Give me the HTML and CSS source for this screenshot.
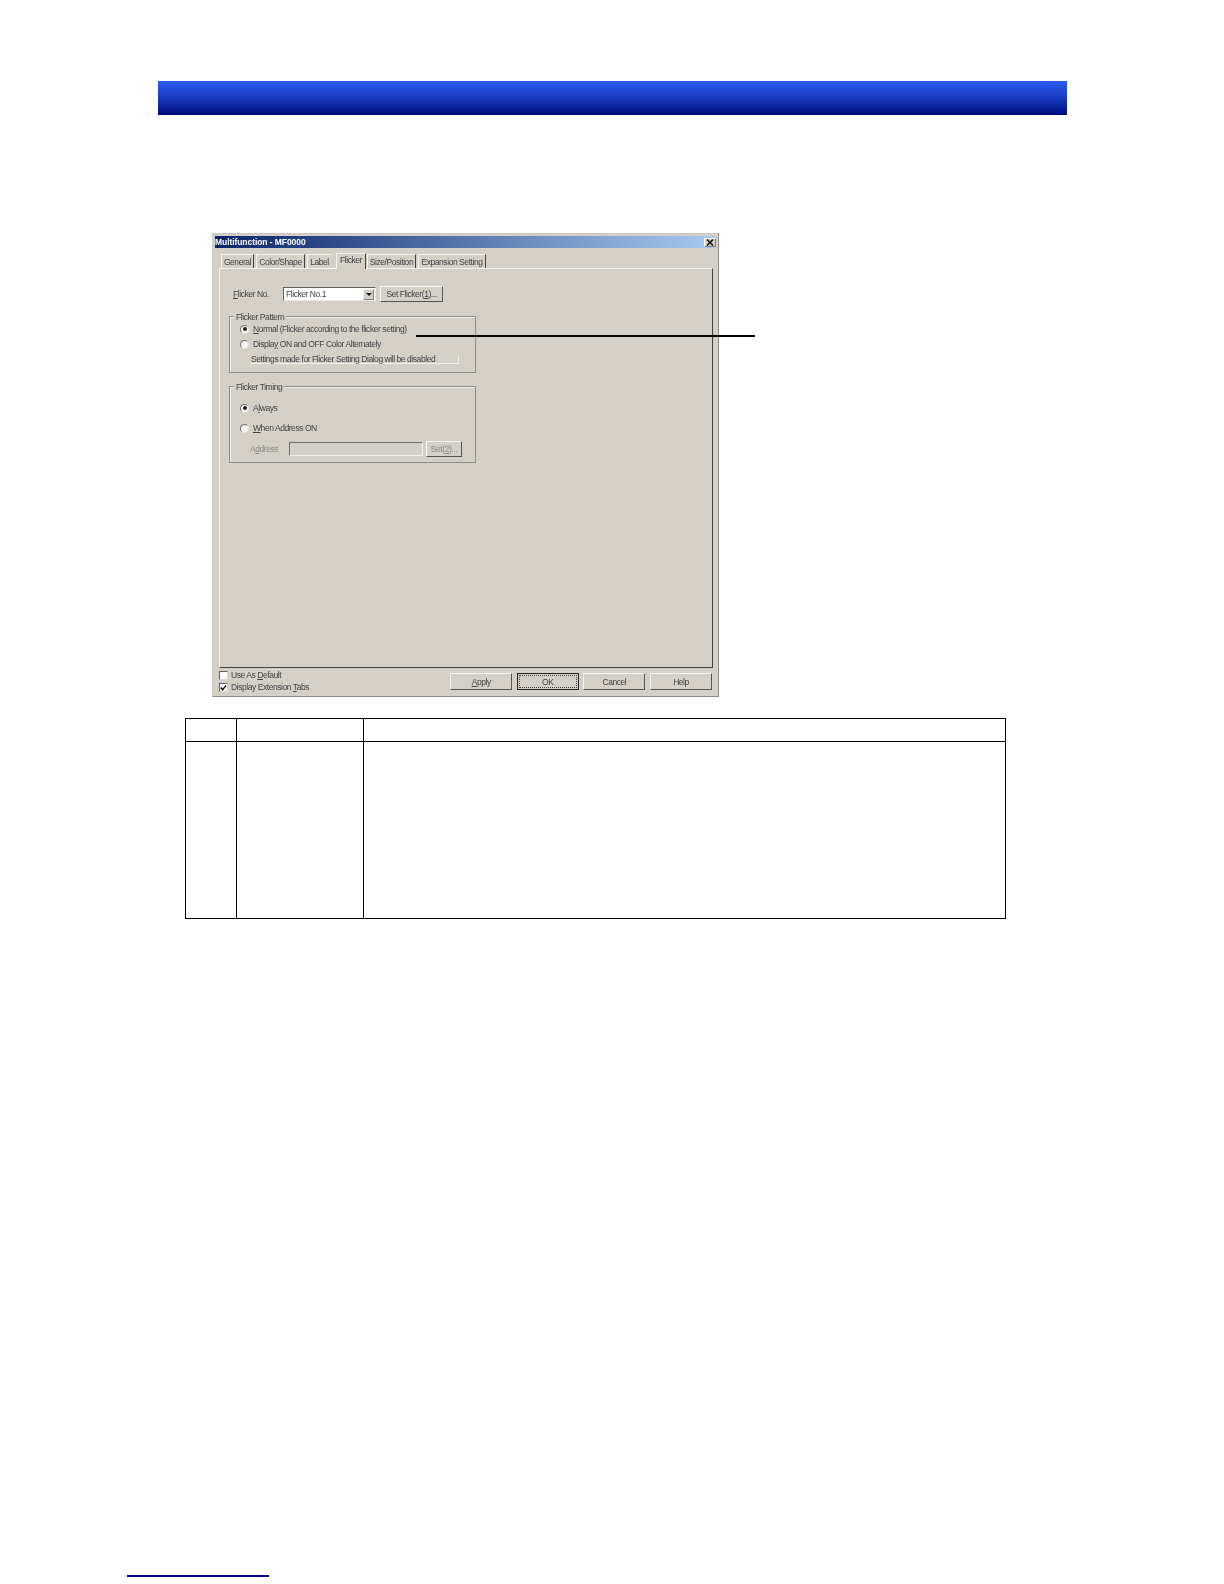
FILE: index.html
```html
<!DOCTYPE html>
<html lang="en">
<head>
  <meta charset="UTF-8">
  <title>Multifunction - Flicker</title>
  <link rel="stylesheet" href="styles.css">
</head>

<body>
<div class="banner"></div>

<div class="figure">
  <div class="dialog">
    <div class="titlebar">
      <span>Multifunction - MF0000</span>
      <span class="close">
        <svg width="10" height="7" viewBox="0 0 10 7"><path d="M2 0.5 L8 6.5 M8 0.5 L2 6.5" stroke="#111" stroke-width="1.6" fill="none"/></svg>
      </span>
    </div>

    <div class="tabs">
      <div class="tab tab-general">General</div>
      <div class="tab tab-color">Color/Shape</div>
      <div class="tab tab-label">Label</div>
      <div class="tab tab-active">Flicker</div>
      <div class="tab tab-size">Size/Position</div>
      <div class="tab tab-exp">Expansion Setting</div>
    </div>

    <div class="panel">
      <div class="flicker-row">
        <span class="flicker-label"><u>F</u>licker No.</span>
        <div class="select">
          <span class="select-value">Flicker No.1</span>
          <span class="select-btn"></span>
        </div>
        <div class="btn btn-flicker">Set Flicker(<u>1</u>)...</div>
      </div>

      <div class="group group-pattern">
        <div class="legend">Flicker Pattern</div>
        <div class="option option-first"><span class="radio on"></span><span><u>N</u>ormal (Flicker according to the flicker setting)</span></div>
        <div class="option option-second"><span class="radio"></span><span>Displa<u>y</u> ON and OFF Color Alternately</span></div>
        <div class="note">Settings made for Flicker Setting Dialog will be disabled</div>
      </div>

      <div class="group group-timing">
        <div class="legend">Flicker Timing</div>
        <div class="option option-always"><span class="radio on"></span><span>A<u>l</u>ways</span></div>
        <div class="option option-when"><span class="radio"></span><span><u>W</u>hen Address ON</span></div>
        <div class="address-row">
          <span class="address-label">A<u>d</u>dress</span>
          <div class="input"></div>
          <div class="btn btn-set">Set(<u>2</u>)...</div>
        </div>
      </div>
    </div>

    <div class="dialog-foot">
      <div class="checks">
        <div class="check-row"><span class="checkbox"></span><span>Use As <u>D</u>efault</span></div>
        <div class="check-row">
          <span class="checkbox">
            <svg width="8" height="8" viewBox="0 0 8 8"><path d="M1 3.5 L3 6 L7 1" stroke="#111" stroke-width="1.7" fill="none"/></svg>
          </span>
          <span>Display Extension <u>T</u>abs</span>
        </div>
      </div>
      <div class="foot-btns">
        <div class="btn btn-foot"><u>A</u>pply</div>
        <div class="btn btn-foot btn-default"><span class="focus">OK</span></div>
        <div class="btn btn-foot">Cancel</div>
        <div class="btn btn-foot">Help</div>
      </div>
    </div>
  </div>
  <div class="callout"></div>
</div>

<table class="spec">
  <tr class="spec-head"><td class="c1"></td><td class="c2"></td><td></td></tr>
  <tr class="spec-body"><td></td><td></td><td></td></tr>
</table>

<div class="foot-rule"></div>
</body>
</html>
```

FILE: styles.css
```css
* {
  box-sizing: border-box;
}

html, body {
  margin: 0;
  padding: 0;
  background: #fff;
}

body {
  height: 1584px;
  overflow: hidden;
  padding-top: 81px;
  font-family: "Liberation Sans", Arial, sans-serif;
}

.banner {
  width: 909px;
  height: 34px;
  margin-left: 158px;
  background: linear-gradient(to bottom, #2b5cf2 0%, #1f45d0 35%, #0d2aa6 70%, #000a7c 100%);
}

/* dialog screenshot */
.figure {
  position: relative;
  width: 508px;
  margin: 118px 0 0 212px;
}

.dialog {
  width: 507px;
  height: 464px;
  padding: 2px 2px 0;
  background: #d4d0c8;
  border: 1px solid #8a8a86;
  border-top-color: #c8c8c4;
  border-left-color: #c8c8c4;
  font-size: 8.5px;
  line-height: 10px;
  letter-spacing: -0.44px;
  color: #444;
  white-space: nowrap;
  filter: blur(0.35px);
}

.titlebar {
  display: flex;
  justify-content: space-between;
  align-items: center;
  height: 12px;
  background: linear-gradient(to right, #0a246a, #a6caf0);
  color: #fff;
  font-weight: bold;
  letter-spacing: -0.07px;
}

.close {
  display: flex;
  align-items: center;
  justify-content: center;
  width: 12px;
  height: 9px;
  background: #d4d0c8;
  border: 1px solid #808080;
  border-top-color: #fff;
  border-left-color: #fff;
}

.tabs {
  display: flex;
  align-items: flex-end;
  height: 20px;
  padding-left: 6px;
}

.tab {
  height: 14px;
  padding-top: 2px;
  text-align: center;
  border-top: 1px solid #f4f4f0;
  border-left: 1px solid #f4f4f0;
  border-right: 1px solid #404040;
  margin-right: 2px;
}

.tab-general { width: 33px; }
.tab-color { width: 49px; }
.tab-label { width: 25px; margin-right: 4px; border-right-color: transparent; }
.tab-active { width: 30px; height: 16px; margin-right: 1px; position: relative; top: 1px; background: #d4d0c8; z-index: 1; padding-top: 1px; }
.tab-size { width: 49px; }
.tab-exp { width: 68px; }

.panel {
  width: 494px;
  height: 400px;
  margin-left: 4px;
  padding: 17px 0 0 9px;
  border: 1px solid #404040;
  border-top-color: #f4f4f0;
  border-left-color: #f4f4f0;
}

.flicker-row {
  display: flex;
  align-items: center;
  height: 16px;
  padding-left: 4px;
}

.flicker-label {
  width: 50px;
}

.select {
  display: flex;
  justify-content: space-between;
  align-items: center;
  width: 93px;
  height: 14px;
  margin-right: 4px;
  padding: 0 1px 0 2px;
  background: #fff;
  border: 1px solid #606060;
  border-right-color: #e8e8e4;
  border-bottom-color: #e8e8e4;
}

.select-btn {
  position: relative;
  width: 11px;
  height: 11px;
  background: #d4d0c8;
  border: 1px solid #808080;
  border-top-color: #eee;
  border-left-color: #eee;
}

.select-btn::after {
  content: "";
  position: absolute;
  left: 2px;
  top: 3px;
  border-left: 3px solid transparent;
  border-right: 3px solid transparent;
  border-top: 3px solid #111;
}

.btn {
  display: flex;
  align-items: center;
  justify-content: center;
  background: #d4d0c8;
  border: 1px solid #555;
  border-top-color: #f6f6f2;
  border-left-color: #f6f6f2;
}

.btn-flicker {
  width: 63px;
  height: 16px;
}

.group {
  position: relative;
  width: 247px;
  border: 1px solid #8c8c88;
  box-shadow: inset 1px 1px 0 #f0f0ec;
}

.group-pattern {
  height: 57px;
  margin-top: 14px;
}

.group-timing {
  height: 77px;
  margin-top: 13px;
}

.legend {
  position: absolute;
  left: 4px;
  top: -5px;
  padding: 0 2px;
  background: #d4d0c8;
}

.option {
  display: flex;
  align-items: center;
  gap: 4px;
  height: 10px;
  padding-left: 10px;
}

.option-first { margin-top: 7px; }
.option-second { margin-top: 5px; }
.option-always { margin-top: 16px; }
.option-when { margin-top: 10px; }

.radio {
  position: relative;
  width: 9px;
  height: 9px;
  border-radius: 50%;
  background: #f6f6f2;
  border: 1px solid #707070;
  border-right-color: #e4e4e0;
  border-bottom-color: #e4e4e0;
}

.radio.on::after {
  content: "";
  position: absolute;
  left: 1.5px;
  top: 1.5px;
  width: 4px;
  height: 4px;
  border-radius: 50%;
  background: #222;
}

.note {
  width: 209px;
  height: 9px;
  margin: 6px 0 0 20px;
  padding-left: 1px;
  border-right: 1px solid #f0f0ec;
  border-bottom: 1px solid #f0f0ec;
  line-height: 8px;
}

.address-row {
  display: flex;
  align-items: center;
  height: 16px;
  margin-top: 8px;
  padding-left: 20px;
  color: #8a8a86;
}

.address-label {
  width: 39px;
}

.input {
  width: 134px;
  height: 14px;
  margin-right: 3px;
  border: 1px solid #707070;
  border-right-color: #f0f0ec;
  border-bottom-color: #f0f0ec;
}

.btn-set {
  width: 36px;
  height: 16px;
}

.dialog-foot {
  display: flex;
  justify-content: space-between;
  padding: 1px 4px 0 4px;
}

.check-row {
  display: flex;
  align-items: center;
  gap: 3px;
  height: 12px;
}

.checkbox {
  display: flex;
  width: 9px;
  height: 9px;
  background: #fff;
  border: 1px solid #606060;
  border-right-color: #d8d8d4;
  border-bottom-color: #d8d8d4;
}

.foot-btns {
  display: flex;
  gap: 4.6px;
  padding-top: 4px;
}

.btn-foot {
  width: 62px;
  height: 17px;
}

.btn-default {
  border: 1px solid #222;
  padding: 1px;
}

.focus {
  display: flex;
  align-items: center;
  justify-content: center;
  width: 100%;
  height: 100%;
  border: 1px dotted #444;
}

.callout {
  position: absolute;
  left: 204px;
  top: 102px;
  width: 339px;
  height: 2px;
  background: #000;
}

/* table under the figure */
.spec {
  width: 821px;
  height: 201px;
  margin: 21px 0 0 185px;
  border-collapse: collapse;
  filter: blur(0.25px);
}

.spec td {
  padding: 0;
  border: 1px solid #000;
}

.spec-head {
  height: 23px;
}

.c1 {
  width: 51px;
}

.c2 {
  width: 127px;
}

.foot-rule {
  width: 142px;
  height: 1.5px;
  margin: 656px 0 0 127px;
  background: #00008b;
}
```
